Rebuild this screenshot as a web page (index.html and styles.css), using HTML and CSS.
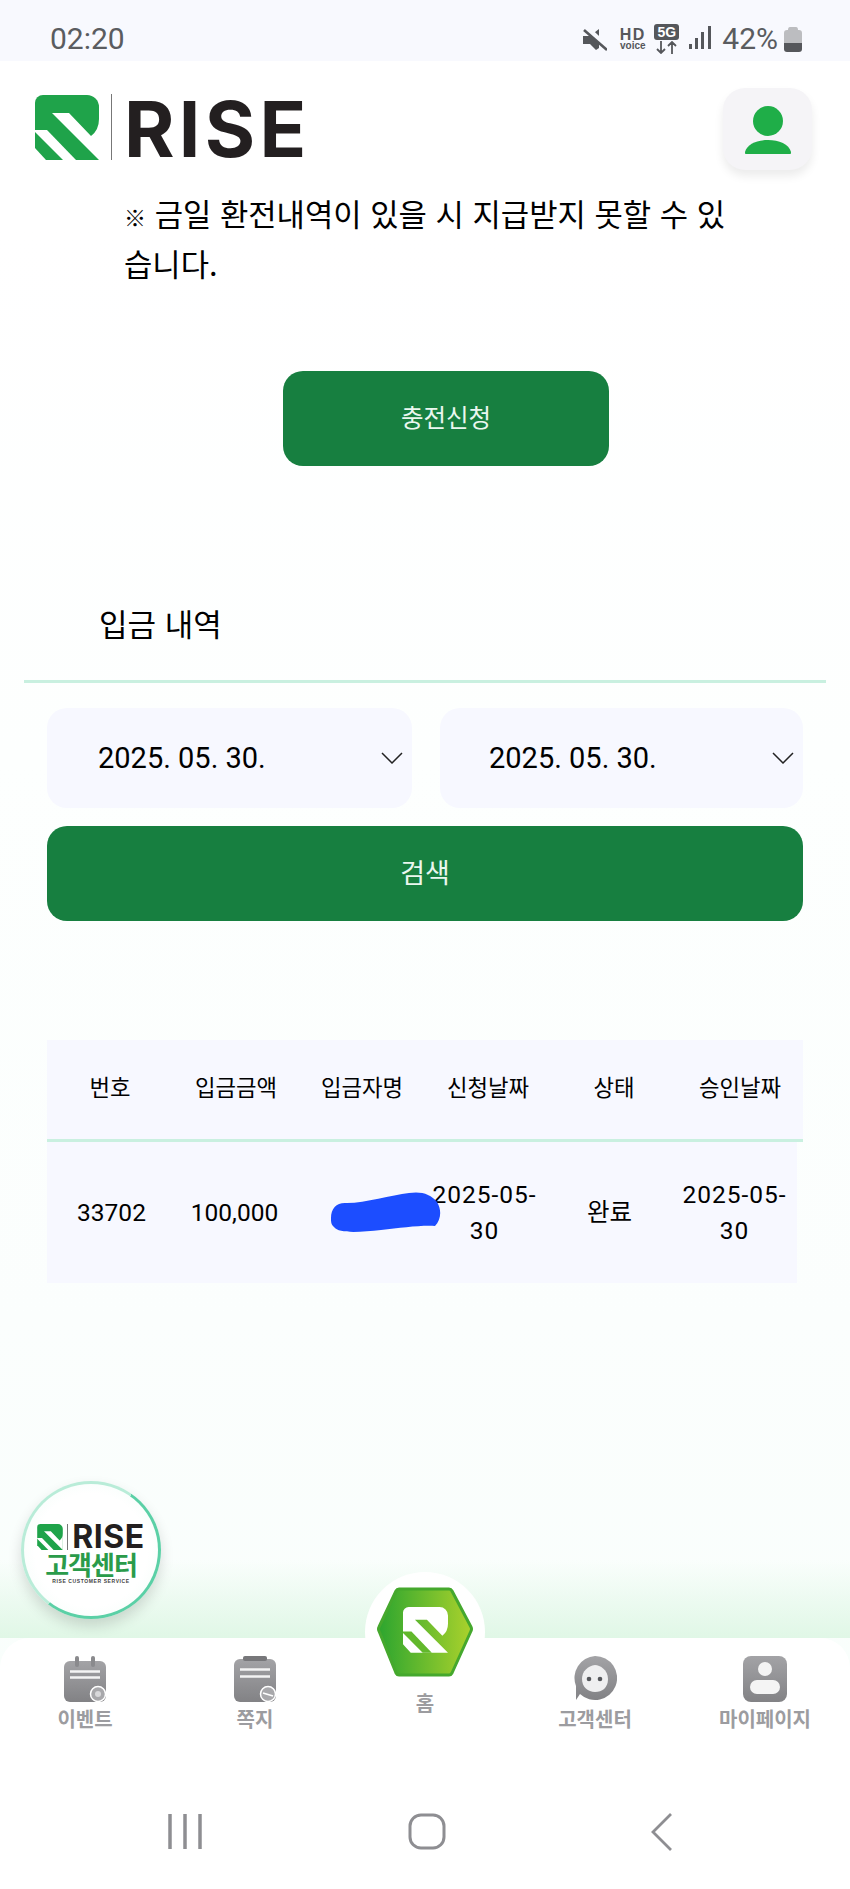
FILE: index.html
```html
<!DOCTYPE html>
<html lang="ko">
<head>
    <meta charset="UTF-8">
    <meta name="viewport" content="width=device-width, initial-scale=1.0">
    <title>RISE 입금 내역</title>
    <link rel="stylesheet" href="styles.css">
</head>
<body>
    <svg class="defs" aria-hidden="true">
        <symbol id="rise-mark" viewBox="0 0 64 65">
            <path fill="#1fa34a" d="M8 0H52a12 12 0 0 1 12 12V65H11L0 53V8a8 8 0 0 1 8-8Z"/>
            <path fill="#fff" d="M17 18H34L56 41Q64 35 64 24V65Z"/>
            <path fill="#fff" d="M0 35H12L41 65H28L0 37Z"/>
        </symbol>
        <linearGradient id="hex-fill" x1="0" x2="1" y1="0" y2="0">
            <stop offset="0" stop-color="#2ca52f"/>
            <stop offset="1" stop-color="#abd22c"/>
        </linearGradient>
        <linearGradient id="gray-fill" x1="0" x2="0" y1="0" y2="1">
            <stop offset="0" stop-color="#a3a3a6"/>
            <stop offset="1" stop-color="#828285"/>
        </linearGradient>
    </svg>

    <div class="page">
        <div class="status-bar">
            <span class="clock">02:20</span>
            <div class="status-icons">
                <svg class="ic-mute" width="24" height="22" viewBox="0 0 24 22">
                    <path fill="#55575b" d="M0 7H7L16 0V19L13 21L7 15H0Z"/>
                    <path stroke="#f8f9fe" stroke-width="5" fill="none" d="M5 0L24 18"/>
                    <path stroke="#55575b" stroke-width="2.6" fill="none" d="M1 1L24 21"/>
                </svg>
                <div class="hd"><b>HD</b><small>voice</small></div>
                <div class="fiveg">
                    <span>5G</span>
                    <svg width="25" height="13" viewBox="0 0 25 13">
                        <path stroke="#55575b" stroke-width="1.8" fill="none" d="M7 0V12M3 8L7 12L11 8M18 13V1M14 5L18 1L22 5"/>
                    </svg>
                </div>
                <svg class="ic-signal" width="22" height="23" viewBox="0 0 22 23">
                    <path fill="#55575b" d="M0 18h3v5H0zM6 12h3v11H6zM12 6h3v17h-3zM19 0h3v23h-3z"/>
                </svg>
                <span class="battery-text">42%</span>
                <svg class="ic-battery" width="18" height="25" viewBox="0 0 18 25">
                    <path fill="#bcbdc0" d="M4 3Q4 0 6 0H12Q14 0 14 3H15Q18 3 18 6V16H0V6Q0 3 3 3Z"/>
                    <path fill="#55575b" d="M0 16H18V22Q18 25 15 25H3Q0 25 0 22Z"/>
                </svg>
            </div>
        </div>

        <header class="top-bar">
            <div class="logo">
                <svg class="logo-mark"><use href="#rise-mark"/></svg>
                <span class="logo-line"></span>
                <span class="logo-text">RISE</span>
            </div>
            <button class="profile-btn" aria-label="내 정보">
                <svg width="46" height="48" viewBox="0 0 46 48">
                    <circle cx="23" cy="15" r="15" fill="#1fae48"/>
                    <path fill="#1fae48" d="M0 46C2 38 12 34 23 34S44 38 46 46Q46 50 42 50H4Q0 50 0 46Z"/>
                </svg>
            </button>
        </header>

        <main class="content">
            <p class="notice"><span class="notice-mark">※</span> 금일 환전내역이 있을 시 지급받지 못할 수 있습니다.</p>
            <button class="btn btn-charge">충전신청</button>

            <section class="card">
                <h2 class="card-title">입금 내역</h2>
                <div class="card-body">
                    <div class="date-row">
                        <div class="date-box">
                            <span>2025. 05. 30.</span>
                            <svg width="22" height="12" viewBox="0 0 22 12"><path d="M1 1L11 11L21 1" fill="none" stroke="#222" stroke-width="1.5"/></svg>
                        </div>
                        <div class="date-box">
                            <span>2025. 05. 30.</span>
                            <svg width="22" height="12" viewBox="0 0 22 12"><path d="M1 1L11 11L21 1" fill="none" stroke="#222" stroke-width="1.5"/></svg>
                        </div>
                    </div>
                    <button class="btn btn-search">검색</button>

                    <div class="table">
                        <div class="table-head">
                            <div>번호</div>
                            <div>입금금액</div>
                            <div>입금자명</div>
                            <div>신청날짜</div>
                            <div>상태</div>
                            <div>승인날짜</div>
                        </div>
                        <div class="table-row">
                            <div class="num-cell">33702</div>
                            <div>100,000</div>
                            <div></div>
                            <div class="date-cell">2025-05-30</div>
                            <div>완료</div>
                            <div class="date-cell">2025-05-30</div>
                            <svg class="scribble" width="110" height="42" viewBox="0 0 110 42">
                                <path fill="#1c4dff" d="M0 26C0 16 6 10 16 11C35 11 60 3 78 1C90 -1 100 2 106 10C111 18 110 28 104 34C90 33 70 36 50 38C30 40 8 42 3 35C0 32 0 30 0 26Z"/>
                            </svg>
                        </div>
                    </div>
                </div>
            </section>
        </main>

        <a class="help-float" href="#">
            <div class="help-inner">
                <div class="help-logo">
                    <svg class="help-mark"><use href="#rise-mark"/></svg>
                    <span class="help-line"></span>
                    <span class="help-rise">RISE</span>
                </div>
                <div class="help-title">고객센터</div>
                <div class="help-sub">RISE CUSTOMER SERVICE</div>
            </div>
        </a>

        <div class="glow"></div>

        <nav class="tabs">
            <div class="tab">
                <svg width="42" height="46" viewBox="0 0 42 46">
                    <rect y="5" width="42" height="41" rx="6" fill="url(#gray-fill)"/>
                    <rect x="11" width="4" height="11" rx="2" fill="#8a8a8d"/>
                    <rect x="27" width="4" height="11" rx="2" fill="#8a8a8d"/>
                    <path stroke="#f4f4f4" stroke-width="2.5" d="M6 15.500H36M6 21.500H36"/>
                    <circle cx="34" cy="38" r="7.500" fill="#a8a8ab" stroke="#fff" stroke-width="1.500"/>
                    <circle cx="34" cy="38" r="3" fill="#d8d8da"/>
                </svg>
                <span>이벤트</span>
            </div>
            <div class="tab">
                <svg width="42" height="46" viewBox="0 0 42 46">
                    <rect y="3" width="42" height="43" rx="6" fill="url(#gray-fill)"/>
                    <rect x="9" y="0" width="24" height="5" rx="2" fill="#77777a"/>
                    <path stroke="#f4f4f4" stroke-width="2.5" d="M6 13.500H36M6 20.500H36"/>
                    <circle cx="34" cy="38" r="7.500" fill="#a8a8ab" stroke="#fff" stroke-width="1.500"/>
                    <path stroke="#fff" stroke-width="1.800" d="M29 37L39 40"/>
                </svg>
                <span>쪽지</span>
            </div>
            <div class="tab tab-home">
                <div class="home-circle">
                    <svg width="96" height="90" viewBox="0 0 96 90">
                        <path fill="url(#hex-fill)" stroke="#45a82d" stroke-width="3" stroke-linejoin="round" d="M22 2H72Q74 2 75 4L94 40Q95 42 94 44L75 86Q74 88 72 88H22Q20 88 19 86L2 44Q1 42 2 40L19 4Q20 2 22 2Z"/>
                        <g transform="translate(26 20) scale(0.703)">
                            <path fill="#fff" d="M8 0H52a12 12 0 0 1 12 12V24Q64 35 56 41L34 18H17L64 65H11L0 53V8a8 8 0 0 1 8-8Z"/>
                            <path fill="#62b82c" d="M0 35H12L41 65H28L0 37Z"/>
                        </g>
                    </svg>
                </div>
                <span>홈</span>
            </div>
            <div class="tab">
                <svg width="44" height="46" viewBox="0 0 44 46">
                    <path fill="url(#gray-fill)" d="M22 0A22 22 0 1 1 7 38L3 44V30A22 22 0 0 1 22 0Z"/>
                    <path fill="#efeff0" d="M22 9C27 9 35 14 35 23S29 36 22 36 9 31 9 23 15 10 22 9Z"/>
                    <circle cx="16" cy="23" r="2.300" fill="#55575b"/>
                    <circle cx="27" cy="23" r="2.300" fill="#55575b"/>
                </svg>
                <span>고객센터</span>
            </div>
            <div class="tab">
                <svg width="44" height="46" viewBox="0 0 44 46">
                    <rect width="44" height="46" rx="8" fill="url(#gray-fill)"/>
                    <circle cx="22" cy="13" r="7" fill="#f4f4f4"/>
                    <rect x="7" y="24" width="30" height="14" rx="7" fill="#f4f4f4"/>
                </svg>
                <span>마이페이지</span>
            </div>
        </nav>

        <div class="system-nav">
            <svg width="34" height="37" viewBox="0 0 34 37"><path d="M2 1V36M17 1V36M32 1V36" stroke="#8e8e92" stroke-width="3.500" fill="none"/></svg>
            <svg width="38" height="37" viewBox="0 0 38 37"><rect x="2" y="2" width="34" height="33" rx="11" stroke="#8e8e92" stroke-width="3" fill="none"/></svg>
            <svg width="21" height="38" viewBox="0 0 21 38"><path d="M20 1L2 19L20 37" stroke="#8e8e92" stroke-width="2.800" fill="none"/></svg>
        </div>
    </div>
</body>
</html>
```

FILE: styles.css
```css
* { box-sizing: border-box; }
html, body { margin: 0; padding: 0; }
body { font-family: "Noto Sans CJK KR", Roboto, sans-serif; color: #000; background: #fff; }
button { font-family: inherit; border: none; cursor: pointer; }
.defs { position: absolute; width: 0; height: 0; }

.page { position: relative; width: 850px; height: 1889px; display: flex; flex-direction: column; overflow: hidden; background: linear-gradient(#fff 0, #fff 12%, #fdfffe 40%, #fbfefd 70%, #f8fefb 100%); }

/* status bar */
.status-bar { height: 61px; flex: none; display: flex; justify-content: space-between; align-items: center; padding: 0 48px 0 50px; background: #f8f9fe; color: #5a5c60; }
.clock { font-family: Roboto, sans-serif; font-size: 30px; margin-top: 16px; line-height: 30px; }
.status-icons { display: flex; align-items: center; margin-top: 10px; height: 30px; }
.ic-mute { margin-right: 12px; margin-top: 8px; }
.hd { display: flex; flex-direction: column; align-items: center; width: 27px; margin-right: 8px; margin-top: 6px; font-family: "Liberation Sans", sans-serif; color: #55575b; line-height: 1; }
.hd b { font-size: 16px; letter-spacing: 1.5px; line-height: 13px; }
.hd small { font-size: 10px; font-weight: 700; line-height: 9px; }
.fiveg { width: 25px; margin-right: 10px; display: flex; flex-direction: column; margin-top: 6px; }
.fiveg span { display: block; height: 16px; background: #55575b; color: #fff; border-radius: 3px; font-family: "Liberation Sans", sans-serif; font-size: 14px; font-weight: 700; line-height: 16px; text-align: center; }
.fiveg svg { display: block; margin-top: 1px; }
.ic-signal { margin-right: 11px; margin-top: 4px; }
.battery-text { font-family: Roboto, sans-serif; font-size: 30px; line-height: 30px; margin-top: 6px; margin-right: 6px; }
.ic-battery { margin-top: 7px; }

/* header */
.top-bar { height: 127px; flex: none; display: flex; justify-content: space-between; align-items: flex-start; padding: 27px 38px 0 35px; background: #fff; }
.logo { display: flex; align-items: center; height: 66px; margin-top: 6px; }
.logo-mark { width: 64px; height: 65px; }
.logo-line { width: 1px; height: 66px; background: #777; margin: 0 12px 0 12px; }
.logo-text { font-family: Inter, sans-serif; font-size: 77px; font-weight: 700; line-height: 66px; color: #231f20; letter-spacing: 4.3px; padding-top: 3px; }
.profile-btn { width: 89px; height: 82px; padding: 0; border-radius: 22px; background: #f5f4f7; box-shadow: 0 6px 10px rgba(0, 0, 0, 0.08); display: flex; justify-content: center; align-items: center; padding-top: 2px; }

/* content */
.content { flex: 1; min-height: 0; }
.notice { width: 612px; margin: 0 0 0 124px; font-size: 30.800px; line-height: 50px; word-break: break-all; }
.notice-mark { font-size: 22px; font-weight: 700; line-height: 1; }
.btn { display: block; background: #177f40; color: #eaf7ef; border-radius: 20px; padding: 0 0 4px; }
.btn-charge { width: 326px; height: 95px; margin: 83px 0 0 283px; font-size: 24.500px; }

.card { margin: 99px 24px 0; }
.card-title { margin: 0; height: 118px; padding: 34px 0 0 75px; font-size: 31px; font-weight: 400; line-height: 48px; border-bottom: 3px solid #c9f0e0; }
.card-body { padding: 25px 23px 0; }
.date-row { display: grid; grid-template-columns: 365px 363px; gap: 28px; }
.date-box { height: 100px; display: flex; justify-content: space-between; align-items: center; padding: 0 9px 0 51px; border-radius: 20px; background: #f7f8ff; font-family: Roboto, sans-serif; font-size: 29px; }
.date-box + .date-box { padding-left: 49px; }
.btn-search { width: 100%; height: 95px; margin-top: 18px; font-size: 27px; }

.table { margin-top: 119px; }
.table-head { display: grid; grid-template-columns: repeat(6, 126px); height: 102px; align-items: center; text-align: center; font-size: 22.300px; background: #f7f8ff; border-bottom: 3px solid #c9f0e0; padding-bottom: 7px; }
.table-row { position: relative; display: grid; grid-template-columns: repeat(6, 125px); height: 141px; width: 750px; align-items: center; text-align: center; font-family: Roboto, "Noto Sans CJK KR", sans-serif; font-size: 24.500px; line-height: 36px; background: #f7f8ff; }
.num-cell { padding-left: 4px; }
.date-cell { overflow-wrap: anywhere; letter-spacing: 1px; }
.scribble { position: absolute; left: 284px; top: 50px; }

/* floating help button */
.help-float { position: absolute; left: 21px; top: 1481px; width: 140px; height: 138px; padding: 3px; border-radius: 50%; background: conic-gradient(from 36deg, #5bd0a6 0 182deg, #b9ecd8 182deg 360deg); box-shadow: 0 7px 14px rgba(0, 0, 0, 0.14); text-decoration: none; }
.help-inner { width: 100%; height: 100%; border-radius: 50%; background: radial-gradient(circle, #fff 60%, #effbf6 100%); display: flex; flex-direction: column; align-items: center; padding-top: 39px; }
.help-logo { display: flex; align-items: center; height: 27px; }
.help-mark { width: 26px; height: 26px; }
.help-line { width: 1px; height: 26px; background: #777; margin: 0 4px 0 4px; }
.help-rise { font-family: Inter, sans-serif; font-size: 32px; font-weight: 700; line-height: 27px; color: #231f20; letter-spacing: 0.5px; }
.help-title { font-size: 26px; font-weight: 700; line-height: 28px; color: #2a9b4a; letter-spacing: -1px; }
.help-sub { font-family: "Liberation Sans", sans-serif; font-size: 5px; font-weight: 700; line-height: 6px; letter-spacing: 0.6px; color: #444; }

/* bottom tabs */
.glow { height: 78px; flex: none; background: linear-gradient(rgba(226, 248, 233, 0), #e0f7e6); }
.tabs { display: grid; grid-template-columns: repeat(5, 170px); height: 152px; flex: none; padding-top: 18px; background: #fff; border-radius: 30px 30px 0 0; }
.tab { display: flex; flex-direction: column; align-items: center; font-size: 20px; font-weight: 700; color: #9c9ca0; line-height: 30px; }
.tab svg { display: block; }
.tab span { margin-top: 2px; }
.tab-home { margin-top: -84px; }
.home-circle { width: 120px; height: 120px; flex: none; border-radius: 50%; background: #fff; display: flex; justify-content: center; align-items: center; }
.tab-home span { margin-top: -4px; }

.system-nav { flex: none; height: 99px; display: flex; justify-content: space-between; align-items: flex-start; padding: 23px 178px 0 168px; background: #fff; }
```
